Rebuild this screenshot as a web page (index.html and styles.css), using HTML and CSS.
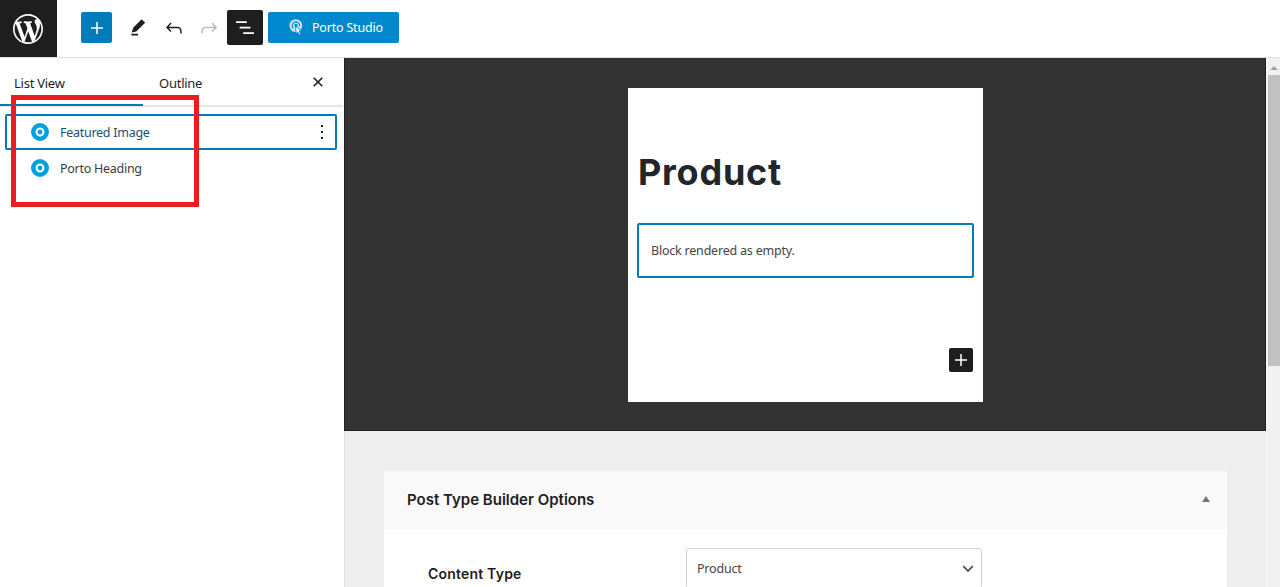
FILE: index.html
```html
<!DOCTYPE html>
<html lang="en">
<head>
<meta charset="utf-8">
<title>Post Type Builder</title>
<link rel="stylesheet" href="styles.css">
</head>
<body>
<div class="editor">
  <header class="topbar">
    <a class="wp-logo"><svg width="30" height="30" viewBox="0 0 20 20"><path d="M20 10c0-5.51-4.49-10-10-10C4.48 0 0 4.49 0 10c0 5.52 4.48 10 10 10 5.51 0 10-4.48 10-10zM7.78 15.37L4.37 6.22c.55-.02 1.17-.08 1.17-.08.5-.06.44-1.13-.06-1.11 0 0-1.45.11-2.37.11-.18 0-.37 0-.58-.01C4.12 2.69 6.87 1.11 10 1.11c2.33 0 4.45.87 6.05 2.34-.68-.11-1.65.39-1.65 1.58 0 .74.45 1.36.9 2.1.35.61.55 1.36.55 2.46 0 1.49-1.4 5-1.4 5l-3.03-8.37c.54-.02.82-.17.82-.17.5-.05.44-1.25-.06-1.22 0 0-1.44.12-2.38.12-.87 0-2.33-.12-2.33-.12-.5-.03-.56 1.2-.06 1.22l.92.08 1.26 3.41zM17.41 10c.24-.64.74-1.87.43-4.25.7 1.29 1.05 2.71 1.05 4.25 0 3.29-1.73 6.24-4.4 7.78.97-2.59 1.94-5.2 2.92-7.78zM6.1 18.09C3.12 16.65 1.11 13.53 1.11 10c0-1.3.23-2.48.72-3.59C3.25 10.3 4.67 14.2 6.1 18.09zm4.03-6.63l2.58 6.98c-.86.29-1.76.45-2.71.45-.79 0-1.57-.11-2.29-.33.81-2.38 1.62-4.74 2.42-7.1z"/></svg></a>
    <button class="insert"><svg width="14" height="14" viewBox="0 0 14 14"><path d="M7 1v12M1 7h12"/></svg></button>
    <svg class="tool tool-edit" width="20" height="20" viewBox="0 0 24 24"><path d="M20.6 5.6L16.4 1.500 6.200 11.700l-1.700 5.600 5.400-1.200zM4 21h8v-2H4z"/></svg>
    <svg class="tool tool-undo" width="24" height="24" viewBox="0 0 24 24"><path d="M18.3 11.7c-.6-.6-1.4-.9-2.3-.9H6.7l2.9-3.3-1.1-1-4.5 5L8.5 16l1-1-2.7-2.7H16c.5 0 .9.2 1.3.5 1 1 1 3.4 1 4.5v.3h1.5v-.2c0-1.5 0-4.3-1.5-5.7z"/></svg>
    <svg class="tool tool-redo" width="24" height="24" viewBox="0 0 24 24"><path d="M15.6 6.5l-1.1 1 2.9 3.3H8c-.9 0-1.7.3-2.3.9-1.4 1.5-1.4 4.2-1.4 5.6v.2h1.5v-.3c0-1.1 0-3.5 1-4.5.3-.3.7-.5 1.3-.5h9.2L14.5 15l1.1 1.1 4.6-4.6-4.6-5z"/></svg>
    <button class="list-toggle"><svg width="24" height="24" viewBox="0 0 24 24"><path d="M13.8 5.2H3v1.8h10.8V5.2zm-3.6 11V18H21v-1.8H10.2zm7.2-5.500H6.600v1.800h10.800v-1.800z"/></svg></button>
    <button class="studio">
      <svg width="14" height="17" viewBox="0 0 14 17"><circle class="studio-disc" cx="6.8" cy="6.6" r="6.4"/><path class="studio-ring" d="M4.300 9.300a3.700 3.700 0 1 1 6.200-2"/><circle class="studio-eye" cx="6.900" cy="6.300" r="1.600"/><path class="studio-pointer" d="M6.500 7.400l6.300 4.200-2.500.5 1.500 3.100-1.600.8-1.500-3-1.700 1.700z"/></svg>
      <span>Porto Studio</span>
    </button>
  </header>
  <div class="body">
    <aside class="sidebar">
      <div class="tabs">
        <div class="tab tab-active"><span>List View</span></div>
        <div class="tab"><span>Outline</span></div>
        <svg class="close" width="12" height="12" viewBox="0 0 12 12"><path d="M1.7 1.7l8.6 8.6M10.3 1.7l-8.6 8.6"/></svg>
      </div>
      <div class="tree">
        <div class="row row-selected">
          <svg class="block-icon" width="18" height="18" viewBox="0 0 18 18"><circle cx="9" cy="9" r="6.7"/><circle class="dot" cx="9" cy="9" r="2.4"/></svg>
          <span>Featured Image</span>
          <svg class="more" width="4" height="16" viewBox="0 0 4 16"><path d="M1 1h2v2H1zM1 7h2v2H1zM1 13h2v2H1z"/></svg>
        </div>
        <div class="row">
          <svg class="block-icon" width="18" height="18" viewBox="0 0 18 18"><circle cx="9" cy="9" r="6.7"/><circle class="dot" cx="9" cy="9" r="2.4"/></svg>
          <span>Porto Heading</span>
        </div>
      </div>
    </aside>
    <main class="content">
      <section class="canvas">
        <div class="page">
          <h1>Product</h1>
          <div class="empty"><span>Block rendered as empty.</span></div>
          <button class="append"><svg width="14" height="14" viewBox="0 0 14 14"><path d="M7 1v12M1 7h12"/></svg></button>
        </div>
      </section>
      <section class="options">
        <div class="panel">
          <div class="panel-head"><h2>Post Type Builder Options</h2><svg width="8" height="6" viewBox="0 0 8 6"><path d="M4 0l4 6H0z"/></svg></div>
          <div class="field">
            <label>Content Type</label>
            <div class="select"><span>Product</span><svg width="12" height="8" viewBox="0 0 12 8"><path d="M1.2 1.2L6 6l4.800-4.800"/></svg></div>
          </div>
        </div>
      </section>
    </main>
    <div class="scrollbar"><svg width="8" height="4" viewBox="0 0 8 4"><path d="M4 0l4 4H0z"/></svg><div class="thumb"></div></div>
  </div>
  <div class="highlight"></div>
</div>
</body>
</html>
```
FILE: styles.css
```css
* { box-sizing: border-box; }
body { margin: 0; background: #fff; color: #1e1e1e; font-family: "Noto Sans", "Open Sans", sans-serif; font-size: 13px; }
svg { display: block; flex: none; }
button { border: 0; padding: 0; font: inherit; display: flex; align-items: center; justify-content: center; flex: none; }
span, h1, h2, label { white-space: nowrap; }
.editor { position: relative; width: 1280px; height: 587px; overflow: hidden; display: flex; flex-direction: column; }

.topbar { height: 58px; flex: none; display: flex; align-items: flex-start; border-bottom: 1px solid #e0e0e0; }
.wp-logo { width: 57px; height: 57px; background: #1e1e1e; display: flex; align-items: center; padding-left: 13px; }
.wp-logo svg { fill: #fff; }
.insert { width: 31px; height: 31px; margin: 12px 0 0 24px; background: #007cba; border-radius: 2px; }
.insert svg, .append svg { fill: none; stroke: #fff; stroke-width: 1.5; }
.tool { fill: #1e1e1e; }
.tool-edit { margin: 18px 0 0 16px; }
.tool-undo { margin: 16px 0 0 14px; }
.tool-redo { margin: 16px 0 0 11px; fill: #bbb; }
.list-toggle { width: 36px; height: 35px; margin: 10px 0 0 6px; background: #1e1e1e; border-radius: 2px; }
.list-toggle svg { fill: #fff; }
.studio { width: 131px; height: 31px; margin: 12px 0 0 5px; background: #0088cc; color: #fff; border-radius: 2px; justify-content: flex-start; padding-left: 21px; gap: 9px; font-size: 12.5px; letter-spacing: -.2px; }
.studio-disc { fill: #c9e5f5; }
.studio-ring { fill: none; stroke: #0088cc; stroke-width: 1.1; }
.studio-eye { fill: #0088cc; }
.studio-pointer { fill: #e4f2fa; stroke: #0088cc; stroke-width: .8; }

.body { flex: 1; min-height: 0; display: flex; }
.sidebar { width: 344px; flex: none; }
.tabs { height: 49px; display: flex; border-bottom: 2px solid #e6e6e6; margin-right: 1px; }
.tab { width: 143px; height: 48px; padding: 16px 0 0 14px; line-height: 18px; letter-spacing: -.25px; border-bottom: 2px solid transparent; }
.tab + .tab { padding-left: 16px; }
.tab-active { border-bottom-color: #007cba; }
.close { margin: 18px 0 0 26px; stroke: #1e1e1e; stroke-width: 1.6; fill: none; }
.tree { padding: 7px 7px 0 5px; }
.row { height: 36px; display: flex; align-items: center; padding-left: 26px; color: #3c3c3c; font-size: 12.5px; letter-spacing: -.27px; }
.row span { margin-left: 11px; }
.row-selected { border: 2px solid #007cba; border-radius: 2px; padding-left: 24px; color: #1d4f6e; }
.block-icon circle { fill: #fff; stroke: #00a0e0; stroke-width: 4.5; }
.block-icon .dot { fill: #00a0e0; stroke: none; }
.more { margin: 0 11px 0 auto; fill: #1e1e1e; }

.content { flex: 1; min-width: 0; display: flex; flex-direction: column; }
.canvas { height: 373px; flex: none; background: #333; padding: 30px 0 0 283px; border: 1px solid #222; border-top: 0; }
.page { width: 355px; height: 314px; background: #fff; padding: 60px 9px 0; display: flex; flex-direction: column; }
h1 { margin: 0; height: 48px; line-height: 48px; padding-left: 1px; font-family: Inter, sans-serif; font-size: 36px; font-weight: 700; letter-spacing: .75px; color: #222529; }
.empty { height: 55px; margin-top: 27px; border: 2px solid #007cba; border-radius: 2px; display: flex; align-items: center; padding-left: 12px; color: #444; font-size: 12.5px; letter-spacing: -.21px; }
.append { width: 24px; height: 24px; background: #1e1e1e; border-radius: 2px; align-self: flex-end; margin: 70px 1px 0 0; }
.options { flex: 1; min-height: 0; background: #eee; border-left: 1px solid #e3e3e3; padding: 40px 39px 0; }
.panel { height: 140px; background: #fff; }
.panel-head { height: 58px; background: #f9f9f9; display: flex; align-items: center; justify-content: space-between; padding: 0 17px 2px 23px; }
.panel-head svg { fill: #72777c; }
h2, label { margin: 0; font-family: Inter, sans-serif; font-weight: 600; color: #1e1e1e; }
h2 { font-size: 15px; }
.field { display: flex; padding: 19px 0 0 44px; }
label { width: 258px; font-size: 14px; letter-spacing: .2px; line-height: 20px; padding-top: 16px; }
.select { width: 296px; height: 41px; border: 1px solid #d5d5d5; border-radius: 3px; display: flex; align-items: center; justify-content: space-between; padding: 0 7px 0 10px; color: #444; font-size: 12.5px; }
.select span { letter-spacing: -.2px; }
.select svg { fill: none; stroke: #555; stroke-width: 1.8; }
.scrollbar { width: 14px; flex: none; background: #f1f1f1; border-left: 2px solid #f5f5f5; display: flex; flex-direction: column; align-items: center; padding-top: 8px; }
.scrollbar svg { fill: #a3a3a3; }
.thumb { width: 12px; height: 291px; margin-top: 5px; background: #c1c1c1; }

/* Annotation frame drawn over the block list */
.highlight { position: absolute; left: 11px; top: 95px; width: 188px; height: 112px; border: 5px solid #ed1c24; }
```
